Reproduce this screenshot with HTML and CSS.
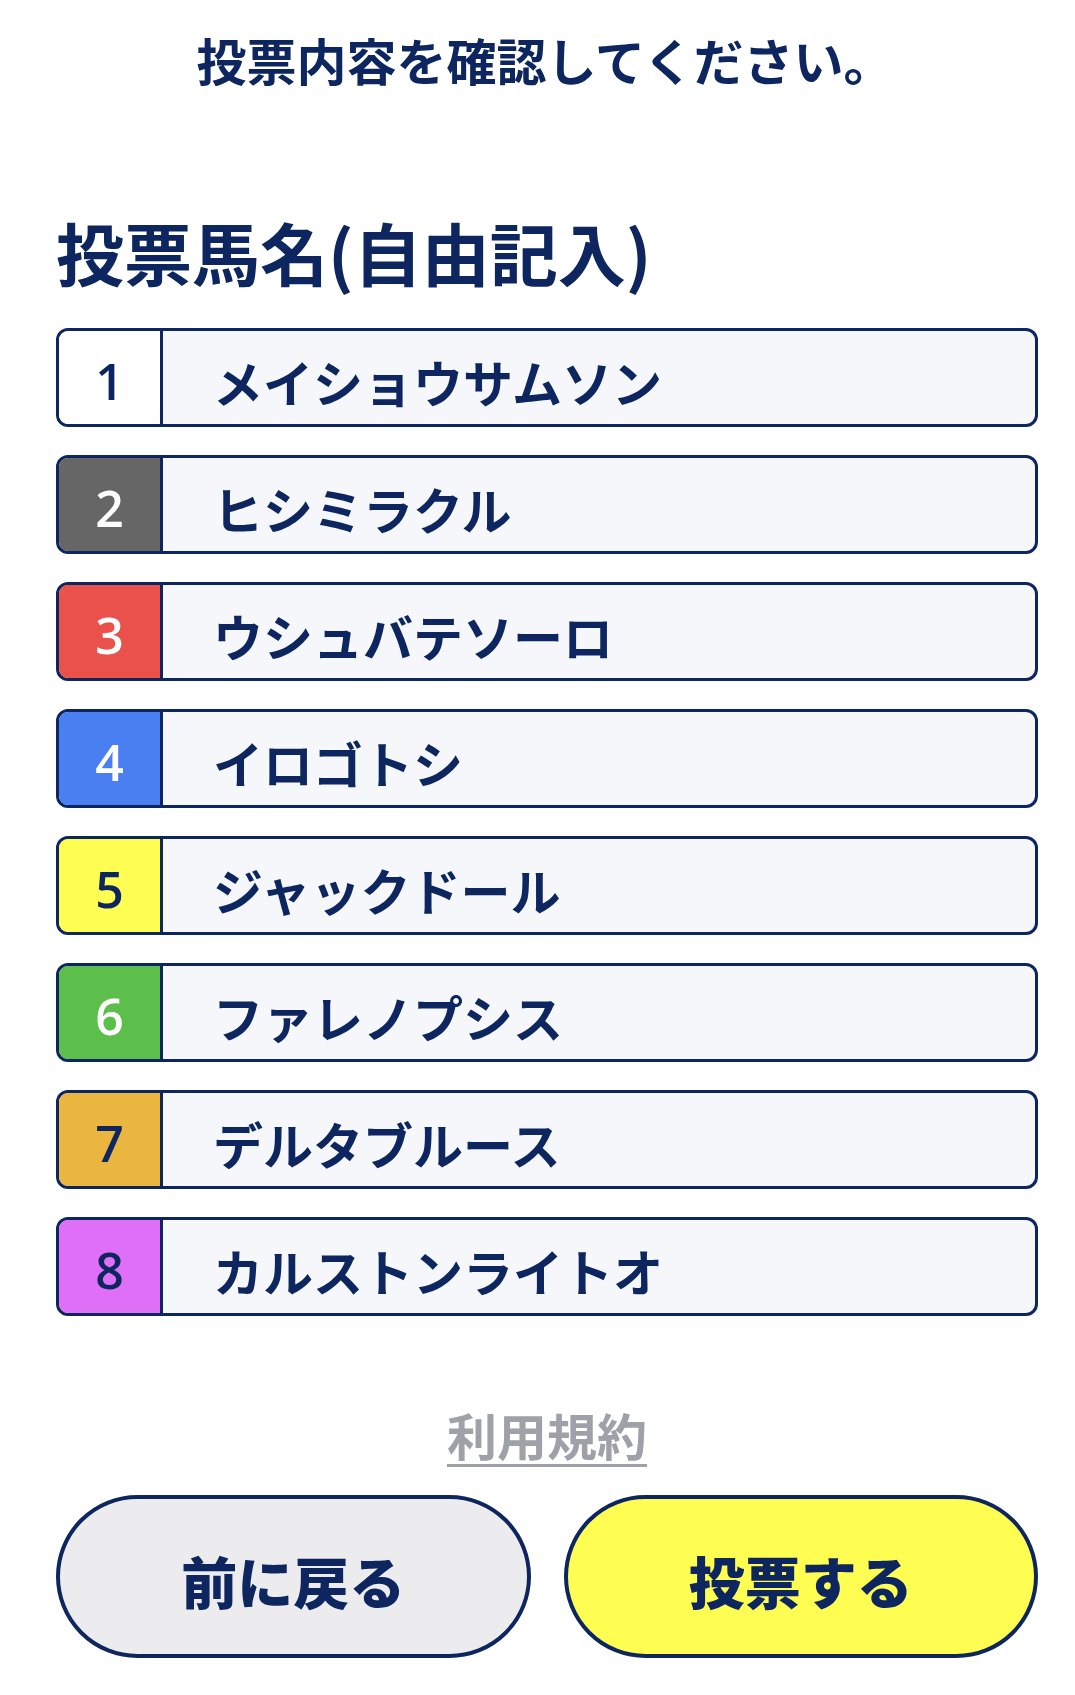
FILE: index.html
```html
<!DOCTYPE html>
<html lang="ja">
<head>
<meta charset="utf-8">
<title>投票内容確認</title>
<link rel="stylesheet" href="styles.css">
</head>
<body>
<main class="page">
  <h1 class="title">投票内容を確認してください。</h1>
  <h2 class="heading">投票馬名(自由記入)</h2>
  <ul class="list">
    <li class="row"><span class="num n1">1</span><span class="name">メイショウサムソン</span></li>
    <li class="row"><span class="num n2">2</span><span class="name">ヒシミラクル</span></li>
    <li class="row"><span class="num n3">3</span><span class="name">ウシュバテソーロ</span></li>
    <li class="row"><span class="num n4">4</span><span class="name">イロゴトシ</span></li>
    <li class="row"><span class="num n5">5</span><span class="name">ジャックドール</span></li>
    <li class="row"><span class="num n6">6</span><span class="name">ファレノプシス</span></li>
    <li class="row"><span class="num n7">7</span><span class="name">デルタブルース</span></li>
    <li class="row"><span class="num n8">8</span><span class="name">カルストンライトオ</span></li>
  </ul>
  <div class="terms"><a class="terms-link" href="#">利用規約</a></div>
  <div class="buttons">
    <button class="btn btn-back">前に戻る</button>
    <button class="btn btn-vote">投票する</button>
  </div>
</main>
</body>
</html>
```
FILE: styles.css
```css
html, body {
  margin: 0;
  padding: 0;
  background: #ffffff;
}
body {
  font-family: "Noto Sans CJK JP", "Noto Sans", sans-serif;
  color: #0e2660;
}
.page {
  padding: 34px 37px 0 56px;
  width: 1075px;
  box-sizing: border-box;
}
.title {
  margin: 0 0 0 -4px;
  text-align: center;
  font-size: 50px;
  line-height: 50px;
  font-weight: 700;
  letter-spacing: 0;
}
.heading {
  margin: 134px 0 0 0;
  font-size: 68px;
  line-height: 68px;
  font-weight: 700;
}
.list {
  list-style: none;
  margin: 42px 0 0 0;
  padding: 0;
  display: flex;
  flex-direction: column;
  gap: 28px;
}
.row {
  display: flex;
  height: 99px;
  box-sizing: border-box;
  border: 3px solid #0e2660;
  border-radius: 12px;
  overflow: hidden;
  background: #f5f7fa;
}
.num {
  width: 104px;
  flex: none;
  box-sizing: border-box;
  border-right: 3px solid #0e2660;
  display: flex;
  align-items: center;
  justify-content: center;
  font-family: "Open Sans", "Noto Sans", sans-serif;
  font-weight: 600;
  font-size: 50px;
  padding-top: 6px;
}
.n1 { background: #ffffff; color: #0e2660; }
.n2 { background: #666666; color: #ffffff; }
.n3 { background: #ea514b; color: #ffffff; }
.n4 { background: #4a7ff2; color: #ffffff; }
.n5 { background: #fdfd52; color: #0e2660; }
.n6 { background: #5cbf4b; color: #ffffff; }
.n7 { background: #ebb640; color: #0e2660; }
.n8 { background: #df6ff7; color: #0e2660; }
.name {
  display: flex;
  align-items: center;
  padding-left: 50px;
  padding-top: 6px;
  font-size: 50px;
  font-weight: 700;
  letter-spacing: 0;
}
.terms {
  margin-top: 90px;
  display: flex;
  justify-content: center;
}
.terms-link {
  color: #9ea1a8;
  font-size: 50px;
  line-height: 56px;
  font-weight: 700;
  text-decoration: none;
  border-bottom: 3px solid #9ea1a8;
  padding-bottom: 2px;
}
.buttons {
  margin-top: 28px;
  display: flex;
  gap: 33px;
}
.btn {
  flex: 1;
  height: 163px;
  border: 4px solid #0e2660;
  border-radius: 82px;
  font-family: "Noto Sans CJK JP", sans-serif;
  font-size: 56px;
  font-weight: 900;
  color: #0e2660;
  padding: 6px 0 0 0;
}
.btn-back { background: #ececee; }
.btn-vote { background: #fefe52; }
```
